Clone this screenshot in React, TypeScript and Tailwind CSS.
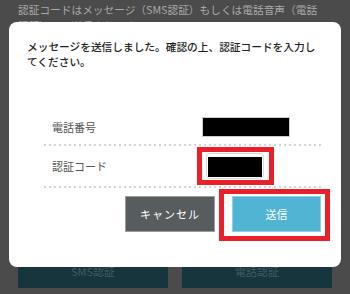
export default function App() {
    return (
        <div
            className="relative w-[350px] h-[294px] overflow-hidden bg-[#4b4b4b]"
            style={{ fontFamily: '"Noto Sans CJK JP", "Noto Sans", sans-serif' }}
        >
            {/* page behind the dialog */}
            <div className="flex flex-col h-full px-[18px] pt-[2px]">
                <p className="w-[307px] text-[10.7px] leading-[16px] text-[#a9a9a9]">
                    認証コードはメッセージ（SMS認証）もしくは電話音声（電話認証）にて送信されます。
                </p>
                <div className="mt-auto mb-[6px] flex gap-[14px]">
                    <div className="flex h-[34px] w-[150px] items-center justify-center bg-[#17353c] text-[11px] text-[#3f5c63]">
                        SMS認証
                    </div>
                    <div className="flex h-[34px] w-[150px] items-center justify-center bg-[#17353c] text-[11px] text-[#3f5c63]">
                        電話認証
                    </div>
                </div>
            </div>

            {/* dialog */}
            <div className="absolute left-[9px] top-[22px] w-[332px] h-[245px] rounded-[8px] bg-white">
                <p className="pt-[17px] px-[18px] text-[10.7px] leading-[15px] font-medium text-[#222]">
                    メッセージを送信しました。確認の上、認証コードを入力してください。
                </p>

                <div className="ml-[35px] mt-[41px] w-[278px]">
                    <div className="flex h-[34px] items-center">
                        <span className="w-[158px] pl-[8px] text-[11px] text-[#555]">電話番号</span>
                        <div className="h-[20px] w-[88px] border border-[#ccc] bg-black" />
                    </div>
                    <div className="h-[2px] bg-[repeating-linear-gradient(90deg,#d4d4d4_0_2px,transparent_2px_5px)]" />
                    <div className="flex h-[40px] items-center">
                        <span className="w-[162px] pl-[8px] text-[11px] text-[#555]">認証コード</span>
                        <div className="relative h-[26px] w-[58px] rounded-[4px] border border-[#d8d8d8] pl-[1px] pt-[3px]">
                            <div className="h-[20px] w-[54px] bg-black" />
                            <div className="absolute -left-[10px] -top-[7px] h-[38px] w-[77px] border-[5px] border-[#e8202a]" />
                        </div>
                    </div>
                    <div className="h-[2px] bg-[repeating-linear-gradient(90deg,#d4d4d4_0_2px,transparent_2px_5px)]" />
                </div>

                <div className="mt-[8px] flex justify-end gap-[17px] pr-[20px]">
                    <button className="h-[36px] w-[90px] border border-[#9a9e9f] bg-[#575c5e] text-[11px] text-white tracking-[1px]">
                        キャンセル
                    </button>
                    <div className="relative">
                        <button className="h-[36px] w-[89px] border border-[#8fd0e4] bg-[#52b4d3] text-[11px] text-white">
                            送信
                        </button>
                        <div className="absolute -left-[13px] -top-[7px] h-[52px] w-[111px] border-[5px] border-[#e8202a]" />
                    </div>
                </div>
            </div>
        </div>
    );
}
